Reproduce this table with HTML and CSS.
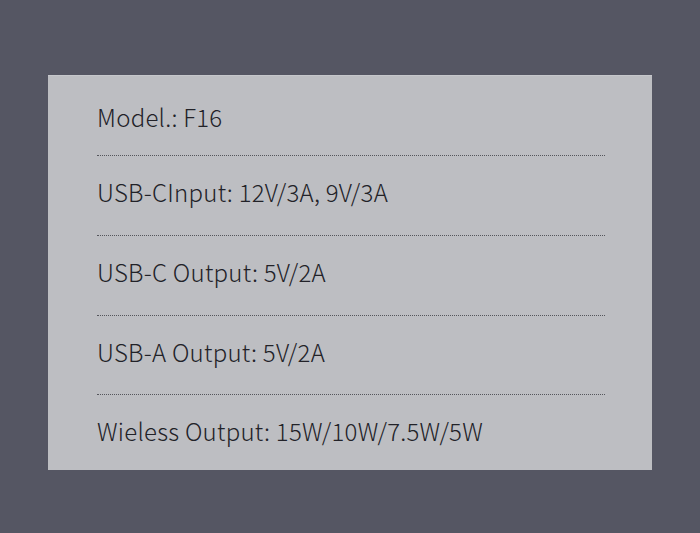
FILE: index.html
```html
<!DOCTYPE html>
<html>
<head>
<meta charset="utf-8">
<link rel="stylesheet" href="styles.css">
</head>
<body>
<div class="card">
  <div class="row first">Model.: F16</div>
  <div class="row">USB-CInput: 12V/3A, 9V/3A</div>
  <div class="row">USB-C Output: 5V/2A</div>
  <div class="row short">USB-A Output: 5V/2A</div>
  <div class="row last">Wieless Output: 15W/10W/7.5W/5W</div>
</div>
</body>
</html>
```
FILE: styles.css
```css
html, body {
  margin: 0;
  padding: 0;
}
body {
  width: 700px;
  height: 533px;
  background: #555663;
  padding-top: 75px;
  box-sizing: border-box;
  font-family: "Noto Sans CJK SC", "Noto Sans", sans-serif;
}
.card {
  margin-left: 48px;
  width: 604px;
  height: 395px;
  background: #bdbec2;
  box-sizing: border-box;
  padding: 0 47px 0 49px;
  border-top: 1px solid #c6c7cb;
}
.row {
  height: 80px;
  box-sizing: border-box;
  border-bottom: 1px dotted #55565c;
  padding-top: 18px;
  font-size: 24px;
  font-weight: 300;
  letter-spacing: 0.25px;
  color: #222228;
}
.row.first {
  padding-top: 23px;
}
.row.short {
  height: 79px;
}
.row.last {
  height: 74px;
  border-bottom: none;
}
```
